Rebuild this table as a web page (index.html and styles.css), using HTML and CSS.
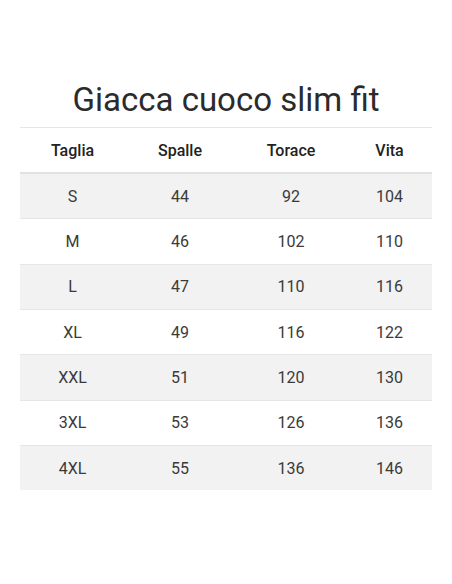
FILE: index.html
```html
<!DOCTYPE html>
<html lang="it">
<head>
<meta charset="utf-8">
<link rel="stylesheet" href="styles.css">
</head>
<body>
<div class="wrap">
  <h1 class="title">Giacca cuoco slim fit</h1>
  <table class="sizes">
    <colgroup>
      <col class="c1"><col class="c2"><col class="c3"><col class="c4">
    </colgroup>
    <thead>
      <tr><th>Taglia</th><th>Spalle</th><th>Torace</th><th>Vita</th></tr>
    </thead>
    <tbody>
      <tr><td>S</td><td>44</td><td>92</td><td>104</td></tr>
      <tr><td>M</td><td>46</td><td>102</td><td>110</td></tr>
      <tr><td>L</td><td>47</td><td>110</td><td>116</td></tr>
      <tr><td>XL</td><td>49</td><td>116</td><td>122</td></tr>
      <tr><td>XXL</td><td>51</td><td>120</td><td>130</td></tr>
      <tr><td>3XL</td><td>53</td><td>126</td><td>136</td></tr>
      <tr><td>4XL</td><td>55</td><td>136</td><td>146</td></tr>
    </tbody>
  </table>
</div>
</body>
</html>
```
FILE: styles.css
```css
html, body {
  margin: 0;
  padding: 0;
  background: #ffffff;
}
body {
  font-family: Roboto, "Liberation Sans", sans-serif;
  color: #333333;
}
.wrap {
  padding: 79px 20px 0 20px;
}
.title {
  margin: 0 0 6px 0;
  font-size: 33px;
  font-weight: 400;
  line-height: 42px;
  text-align: center;
  color: #2b2b2b;
}
.sizes {
  width: 412px;
  border-collapse: collapse;
  table-layout: fixed;
  font-size: 16px;
}
.c1 { width: 105px; }
.c2 { width: 110px; }
.c3 { width: 112px; }
.c4 { width: 85px; }
.sizes th, .sizes td {
  text-align: center;
  padding: 0;
  height: 44.33px;
  border-top: 1px solid #e6e6e6;
}
.sizes th {
  font-weight: 500;
  color: #222222;
  border-bottom: 2px solid #e2e2e2;
  height: 44px;
}
.sizes td {
  color: #3a3a3a;
}
.sizes tbody tr:nth-child(odd) td {
  background: #f2f2f2;
}
.sizes tbody tr:first-child td {
  border-top: 0;
}
```
